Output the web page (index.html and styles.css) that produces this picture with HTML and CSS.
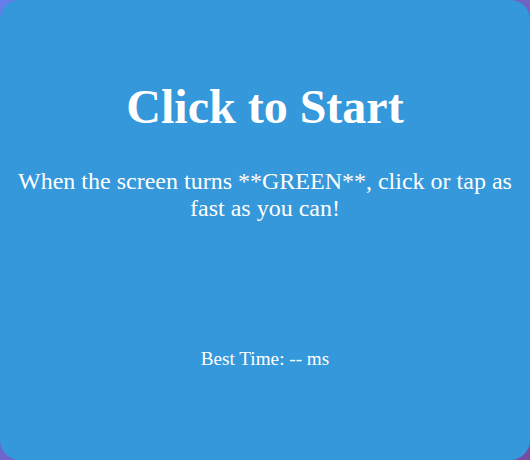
FILE: index.html
```html
<!DOCTYPE html>
<html lang="en">
<head>
<meta charset="utf-8">
<title>Reaction Time</title>
<link rel="stylesheet" href="styles.css">
</head>
<body>
<div class="card">
  <h1 class="title">Click to Start</h1>
  <p class="hint">When the screen turns **GREEN**, click or tap as fast as you can!</p>
  <div class="best">Best Time: -- ms</div>
</div>
</body>
</html>
```

FILE: styles.css
```css
html, body {
  margin: 0;
  padding: 0;
  height: 100%;
}
body {
  background: linear-gradient(135deg, #667eea 0%, #764ba2 100%);
  font-family: "Liberation Serif", "Times New Roman", serif;
}
.card {
  box-sizing: border-box;
  width: 530px;
  height: 460px;
  background: #3498db;
  border-radius: 20px;
  color: #ffffff;
  text-align: center;
  padding: 79px 15px 0;
  display: flex;
  flex-direction: column;
}
.title {
  margin: 0;
  font-size: 48px;
  line-height: 55px;
  font-weight: bold;
}
.hint {
  margin: 34px 0 0;
  font-size: 24px;
  line-height: 27px;
}
.best {
  margin-top: 126px;
  font-size: 19.2px;
  line-height: 22px;
}
```
